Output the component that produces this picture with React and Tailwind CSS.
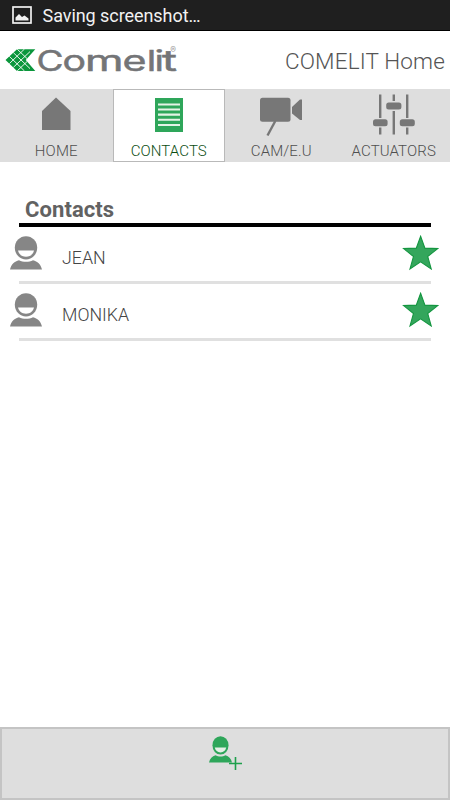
import React from "react";

const logoLetters = [
  { char: "C", x: 36.6, width: 27 },
  { char: "o", x: 62.6, width: 23.5 },
  { char: "m", x: 85, width: 38.5 },
  { char: "e", x: 122.6, width: 24 },
  { char: "l", x: 146.8, width: 9.5 },
  { char: "i", x: 154.4, width: 9.5 },
  { char: "t", x: 162, width: 15 },
];

function Logo() {
  return (
    <svg width="176" height="34" viewBox="4 44 176 34" className="shrink-0" role="img" aria-label="Comelit">
      <path d="M5.5 61 L17 50.3 H35.3 L25.8 61 L35.3 72 H17 Z" fill="#0b963c" />
      <g stroke="#fff" strokeWidth="0.9" fill="none">
        <path d="M9.4 57.4 L24.5 72 M13.4 53.7 L30 69.6 M17.2 50.2 L27 59.5" />
        <path d="M9.4 64.6 L24.5 50 M13.4 68.3 L30 52.6 M17.2 71.9 L27 62.6" />
      </g>
      <g fontFamily="Inter, sans-serif" fill="#747577" stroke="#747577" strokeWidth="0.5" fontSize="28.5" fontWeight="400">
        {logoLetters.map(({ char, x, width }) => (
          <text key={char} x={x} y="71.6" textLength={width} lengthAdjust="spacingAndGlyphs">{char}</text>
        ))}
      </g>
      <text x="170.3" y="53.5" fontFamily="Inter, sans-serif" fontSize="8.5" fill="#999">®</text>
    </svg>
  );
}

function HomeIcon() {
  return (
    <svg width="56" height="46" viewBox="28 91 56 46">
      <path d="M56 97.5 L70.5 111 V130 H42 V111 Z" fill="#777" />
    </svg>
  );
}

function ListIcon() {
  return (
    <svg width="56" height="46" viewBox="141 91 56 46">
      <rect x="155" y="98" width="28" height="34" fill="#2ea65a" />
      <path d="M158 104.5 H180 M158 109.5 H180 M158 114.6 H180 M158 119.8 H180 M158 125 H180" stroke="#e4f3e6" strokeWidth="2.1" />
    </svg>
  );
}

function CameraIcon() {
  return (
    <svg width="56" height="46" viewBox="253 91 56 46">
      <rect x="260" y="97.7" width="30.5" height="24" rx="2.5" fill="#777" />
      <path d="M292 107 L300 99.6 H302 V120 H300 L292 113.5 Z" fill="#777" />
      <path d="M275.3 121 L267.5 135.5" stroke="#777" strokeWidth="2.4" />
    </svg>
  );
}

function SlidersIcon() {
  return (
    <svg width="56" height="46" viewBox="366 91 56 46">
      <g stroke="#777" strokeWidth="2.4" fill="none">
        <path d="M380.2 94.5 V118 M380.2 127.5 V134.5 M393.8 94.5 V101 M393.8 111 V134.5 M407.2 94.5 V118 M407.2 127.5 V134.5" />
      </g>
      <g fill="#777">
        <rect x="373" y="119.2" width="14.6" height="7" rx="2.5" />
        <rect x="386.2" y="102.5" width="15.2" height="7" rx="2.5" />
        <rect x="399.8" y="119.2" width="15" height="7" rx="2.5" />
      </g>
    </svg>
  );
}

function PersonIcon({ fill, bg, className }) {
  return (
    <svg viewBox="0 0 32 34" preserveAspectRatio="none" className={className}>
      <ellipse cx="16" cy="11.8" rx="11.2" ry="11.6" fill={fill} />
      <path d="M8 14.6 H24 C23.2 18.4 20.2 20.7 16 20.7 C11.8 20.7 8.8 18.4 8 14.6 Z" fill={bg} />
      <path d="M0 33.5 C1.2 28.2 4.6 25.2 9 24.2 C13 26.3 19 26.3 23 24.2 C27.4 25.2 30.8 28.2 32 33.5 Z" fill={fill} />
    </svg>
  );
}

function StarIcon() {
  return (
    <svg width="37" height="37" viewBox="402 234 37 37" className="shrink-0">
      <path d="M420.6 236.3 L424.9 248.1 L437.6 248.6 L427.7 256.5 L431.2 268.9 L420.6 261.8 L410 268.9 L413.5 256.5 L403.6 248.6 L416.3 248.1 Z" fill="#34a65c" stroke="#149640" strokeWidth="1.1" />
    </svg>
  );
}

const tabs = [
  { label: "HOME", icon: HomeIcon },
  { label: "CONTACTS", icon: ListIcon, active: true },
  { label: "CAM/E.U", icon: CameraIcon },
  { label: "ACTUATORS", icon: SlidersIcon },
];

const contacts = ["JEAN", "MONIKA"];

export default function App() {
  return (
    <div className="flex h-[800px] w-[450px] flex-col overflow-hidden bg-white font-['Roboto',sans-serif]">
      <div className="flex h-[31px] shrink-0 items-center border-b border-black bg-[#1f1f1f] pl-3">
        <svg width="20" height="18" viewBox="0 0 20 18">
          <rect x="1" y="1" width="18" height="16" fill="none" stroke="#f2f2f2" strokeWidth="1.7" />
          <path d="M3.5 14.5 V11.5 L7 8 L10 11 L12.5 9.5 L16.5 12.5 V14.5 Z" fill="#f2f2f2" />
        </svg>
        <span className="ml-[10.5px] mt-px whitespace-nowrap text-[18px] leading-[30px] tracking-[-0.06px] text-[#f2f2f2]">Saving screenshot…</span>
      </div>

      <header className="flex h-[58px] shrink-0 items-center justify-between pl-1 pr-[5px]">
        <Logo />
        <span className="whitespace-nowrap pt-[3px] text-[22.5px] tracking-[0.15px] font-light text-[#555]">COMELIT Home</span>
      </header>

      <nav className="grid h-[73px] shrink-0 grid-cols-4 bg-[#dedede]">
        {tabs.map(({ label, icon: Icon, active }) => (
          <div
            key={label}
            className={
              active
                ? "flex flex-col items-center border border-[#b9b9b9] bg-white pt-px text-[#0b4d12]"
                : "flex flex-col items-center pt-0.5 text-[#4f4f4f]"
            }
          >
            <Icon />
            <span className="mt-[5px] whitespace-nowrap text-[15px] leading-[18px] tracking-[0.12px] font-light">{label}</span>
          </div>
        ))}
      </nav>

      <main className="flex flex-1 flex-col">
        <h1 className="ml-[19px] mr-[19px] mt-[35px] h-[30px] border-b-[4px] border-black pl-1.5 text-[22px] leading-[26px] tracking-[0.08px] font-bold text-[#626262]">
          Contacts
        </h1>
        {contacts.map((name) => (
          <div key={name} className="flex h-[57px] flex-col">
            <div className="flex h-[54px] items-start pl-[10px] pr-[11px] pt-[7px]">
              <PersonIcon fill="#868686" bg="#fff" className="mt-[1.5px] h-[34px] w-[32px] shrink-0" />
              <span className="ml-5 mt-[13px] flex-1 text-[17.8px] leading-[22px] font-light text-[#444]">{name}</span>
              <StarIcon />
            </div>
            <div className="mx-[19px] h-[3px] bg-[#e0e0e0]" />
          </div>
        ))}
      </main>

      <footer className="flex h-[73px] shrink-0 items-start justify-center border-2 border-[#c4c4c4] bg-[#dedede] pt-[7px]">
        <div className="flex w-[33px] items-start">
          <PersonIcon fill="#2ea65a" bg="#e4f0e6" className="h-[27px] w-[23px] shrink-0" />
          <svg width="13" height="13" viewBox="0 0 13 13" className="-ml-[3px] mt-[21px] shrink-0">
            <path d="M6.5 0 V13 M0 6.5 H13" stroke="#1ea04c" strokeWidth="1.6" />
          </svg>
        </div>
      </footer>
    </div>
  );
}
